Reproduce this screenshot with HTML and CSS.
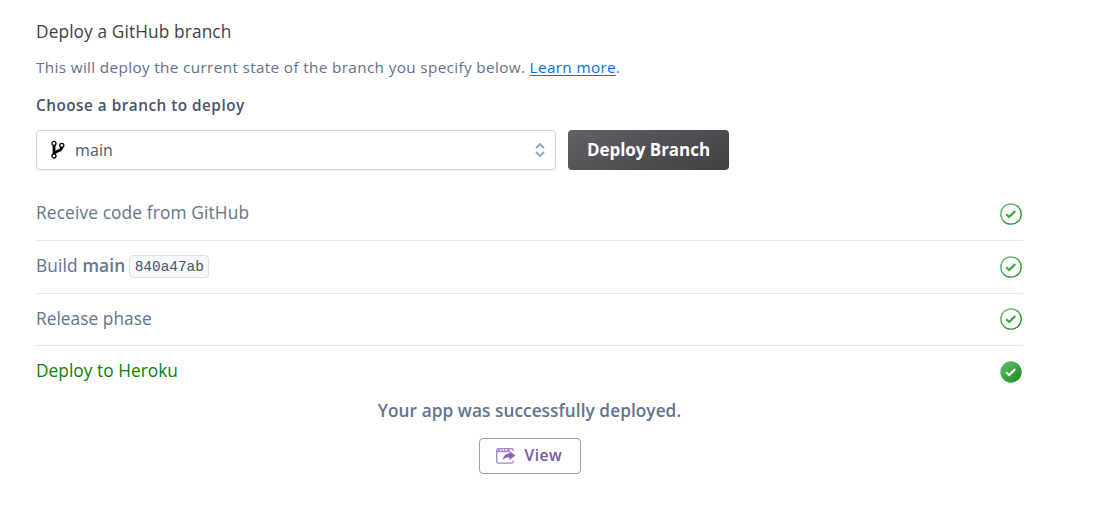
FILE: index.html
```html
<!DOCTYPE html>
<html lang="en">
<head>
<meta charset="utf-8">
<title>Deploy a GitHub branch</title>
<link rel="stylesheet" href="styles.css">
</head>
<body>
<svg width="0" height="0" class="defs" aria-hidden="true">
  <defs>
    <linearGradient id="green" x1="0" y1="0" x2="1" y2="1"><stop offset="0" stop-color="#6cc070"/><stop offset="1" stop-color="#128a16"/></linearGradient>
    <symbol id="done" viewBox="0 0 22 22">
      <circle cx="11" cy="11" r="10.2" fill="none" stroke="url(#green)" stroke-width="1.3"/>
      <path d="M6.2 11.2l3 2.8 6-6" fill="none" stroke="#37a644" stroke-width="2.2"/>
    </symbol>
  </defs>
</svg>
<main class="panel">
  <h1 class="title">Deploy a GitHub branch</h1>
  <p class="intro">This will deploy the current state of the branch you specify below. <a class="link" href="#">Learn more</a>.</p>
  <h2 class="label">Choose a branch to deploy</h2>
  <div class="controls">
    <div class="select">
      <svg class="branch" viewBox="0 0 14 20" fill="none" stroke="#000">
        <path d="M3 5.5v9M3.2 14.2c1-4.6 7.8-1.7 7.6-7.7" stroke-width="2.8"/>
        <g fill="#fff" stroke-width="1.3"><circle cx="3" cy="3.4" r="2"/><circle cx="10.8" cy="5.4" r="2"/><circle cx="3" cy="16" r="2"/></g>
      </svg>
      <span class="value">main</span>
      <svg class="arrows" viewBox="0 0 10 14" fill="none" stroke="#96a3b6" stroke-width="1.8"><path d="M1 5l4-4 4 4M1 9l4 4 4-4"/></svg>
    </div>
    <button class="deploy">Deploy Branch</button>
  </div>
  <ul class="steps">
    <li class="step"><span class="receive">Receive code from GitHub</span><svg class="check"><use href="#done"/></svg></li>
    <li class="step"><span class="build"><span class="build-text">Build <b>main</b></span><code class="hash">840a47ab</code></span><svg class="check"><use href="#done"/></svg></li>
    <li class="step"><span class="release">Release phase</span><svg class="check"><use href="#done"/></svg></li>
    <li class="step current"><span class="heroku">Deploy to Heroku</span><svg class="check" viewBox="0 0 22 22"><circle cx="11" cy="11" r="10.7" fill="url(#green)"/><path d="M6.2 11.2l3 2.8 6-6" fill="none" stroke="#fff" stroke-width="2.2"/></svg></li>
  </ul>
  <div class="result">
    <p class="message">Your app was successfully deployed.</p>
    <button class="view">
      <svg class="open" viewBox="0 0 20 16" fill="none" stroke="#a486c6" stroke-width="1.3">
        <path d="M17.3 3V2.2A1.5 1.5 0 0 0 15.8.7H2.2A1.5 1.5 0 0 0 .7 2.2v11.5a1.5 1.5 0 0 0 1.5 1.5h13.6a1.5 1.5 0 0 0 1.5-1.5V12.5M1 3.6h12"/>
        <path d="M2 2.1h2M5.4 2.1h1.5M8 2.1h1.5M10.7 2.1h3.3" stroke-width="1.8"/>
        <path d="M6.5 12.2C7.5 7.6 10 5.6 13.4 5.6V3l6 4.5-6 4.5V9.3c-3 0-5 .8-6.9 2.9z" fill="#8a66b2" stroke="none"/>
      </svg>
      <span class="view-text">View</span>
    </button>
  </div>
</main>
</body>
</html>
```

FILE: styles.css
```css
* { box-sizing: border-box; }
body { margin: 0; background: #fff; font-family: "Open Sans", sans-serif; color: #3f3f44; }
h1, h2, p, ul { margin: 0; padding: 0; }
.defs { position: absolute; }
.panel { width: 1023px; padding: 20px 0 0 36px; }
.title { font-size: 17.3px; line-height: 24px; font-weight: 400; letter-spacing: .11px; }
.intro { margin-top: 12px; font-size: 15.3px; line-height: 22px; letter-spacing: .35px; color: #62708c; }
.link { color: #0070f0; text-underline-offset: 2px; }
.label { margin-top: 16px; font-size: 15.3px; line-height: 22px; font-weight: 600; letter-spacing: .5px; color: #475569; }
.controls { display: flex; gap: 12px; margin-top: 14px; }
.select { display: flex; align-items: center; width: 520px; height: 40px; padding: 0 10px 0 14px; border: 1px solid #cfd7e6; border-radius: 4px; box-shadow: 0 1px 2px #e6eaf2; }
.branch { width: 14px; height: 20px; }
.value { margin-left: 10px; font-size: 16px; letter-spacing: .1px; color: #505866; }
.arrows { width: 10px; height: 14px; margin-left: auto; }
.deploy { width: 161px; height: 40px; padding: 0 0 2px; border: 0; border-radius: 4px; background: linear-gradient(155deg, #606065, #3f3f44); color: #fff; font: 700 17px "Open Sans", sans-serif; letter-spacing: -.05px; }
.steps { list-style: none; margin-top: 17px; }
.step { display: flex; align-items: center; justify-content: space-between; height: 52.6px; padding: 0 1.5px 0 0; border-bottom: 1px solid #e5e8f2; font-size: 17.3px; color: #62748e; }
.step:first-child { height: 54px; }
.step.current { border: 0; height: 51px; color: #078307; }
.step b { font-weight: 600; }
.receive, .build-text { padding-bottom: 2px; letter-spacing: .14px; }
.release, .heroku { padding-bottom: 2px; letter-spacing: .04px; }
.build { display: flex; align-items: center; gap: 4px; }
.hash { width: 80px; height: 23px; border: 1px solid #dcdfe5; border-radius: 4px; background: #f7f8fb; color: #475569; font: 14.4px/22px "Liberation Mono", monospace; text-align: center; }
.check { width: 22px; height: 22px; }
.result { display: flex; flex-direction: column; align-items: center; }
.message { margin-top: 2px; font-size: 17.2px; line-height: 24px; font-weight: 600; letter-spacing: .08px; color: #62748e; }
.view { display: flex; align-items: center; width: 102px; height: 36px; margin-top: 15px; padding: 0 0 0 16px; gap: 9px; border: 1px solid #ad93cc; border-radius: 4px; background: #fff; color: #79589f; font: 600 15.5px "Open Sans", sans-serif; letter-spacing: .5px; }
.view-text { padding-bottom: 2px; }
.open { width: 20px; height: 16px; }
```
